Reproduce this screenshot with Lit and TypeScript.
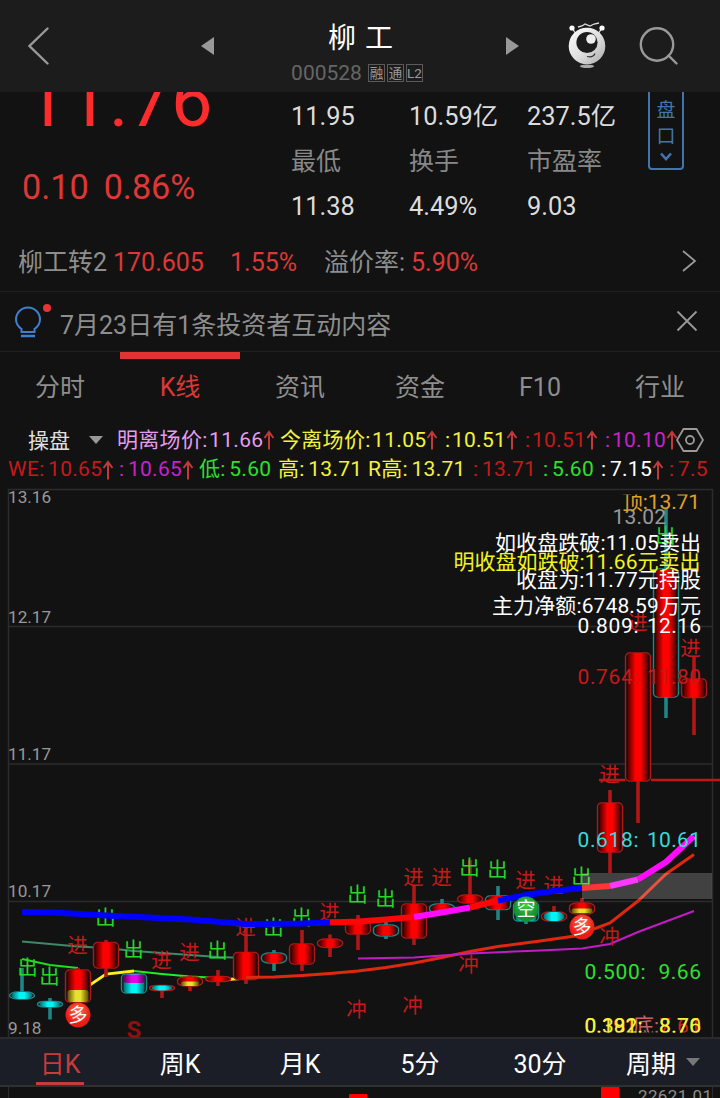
import { LitElement, css, html, nothing, svg } from "lit";
import { customElement, property } from "lit/decorators.js";
import { classMap } from "lit/directives/class-map.js";
import { styleMap } from "lit/directives/style-map.js";

type Legend = { text: string; color: string; width: number; up?: boolean };
// x, body top, body bottom, wick top, wick bottom, fill, outline, wick
type Candle = [number, number, number, number, number, string, string, string];

const RED = "#b01818";
const TEAL = "#1f8585";

const legendTop: Legend[] = [
  { text: "明离场价: 11.66", color: "#e59cf0", width: 163, up: true },
  { text: "今离场价: 11.05", color: "#f3f33c", width: 165, up: true },
  { text: ": 10.51", color: "#f3f33c", width: 80, up: true },
  { text: ": 10.51", color: "#c41a1a", width: 80, up: true },
  { text: ": 10.10", color: "#c822c8", width: 80, up: true },
];

const legendBottom: Legend[] = [
  { text: "WE: 10.65", color: "#c41a1a", width: 111, up: true },
  { text: ": 10.65", color: "#c822c8", width: 80, up: true },
  { text: "低: 5.60", color: "#2ee02e", width: 79 },
  { text: "高: 13.71", color: "#f3f33c", width: 90 },
  { text: "R高: 13.71", color: "#f3f33c", width: 105 },
  { text: ": 13.71", color: "#c41a1a", width: 70 },
  { text: ": 5.60", color: "#2ee02e", width: 58 },
  { text: ": 7.15", color: "#ffffff", width: 68, up: true },
  { text: ": 7.5", color: "#c41a1a", width: 48 },
];

const candles: Candle[] = [
  [22, 992, 999, 968, 992, "cyan", TEAL, TEAL],
  [50, 1001.5, 1007, 998, 1019.5, "cyan", TEAL, TEAL],
  [78, 970, 1002, 968, 1002, "red", RED, RED],
  [106, 942.5, 968, 940, 977, "red", RED, RED],
  [134, 974, 993, 974, 993, "cyan", TEAL, TEAL],
  [162, 985.5, 990.5, 988, 998, "cyan", RED, RED],
  [190, 977, 986, 975, 991, "red", RED, RED],
  [218, 976.5, 981.5, 970, 986, "red", RED, RED],
  [246, 952.5, 979.5, 925, 984, "red", RED, RED],
  [274, 953, 963, 950, 971, "red", TEAL, TEAL],
  [302, 944, 964, 930, 971, "red", RED, RED],
  [330, 939, 947.5, 934.5, 957, "red", RED, RED],
  [358, 922, 934, 915, 950, "red", RED, RED],
  [386, 925, 936, 922, 939, "red", TEAL, TEAL],
  [414, 904, 938, 885, 945, "red", RED, RED],
  [442, 904, 913, 899, 913, "red", TEAL, TEAL],
  [470, 895, 903, 860, 903, "red", RED, RED],
  [498, 896, 909.5, 886, 920, "red", TEAL, TEAL],
  [526, 902, 921, 902, 924, "cyan", TEAL, TEAL],
  [554, 912, 921, 906, 912, "cyan", RED, RED],
  [582, 903, 914, 898, 914, "red", RED, RED],
  [610, 803, 852, 790, 873, "red", RED, RED],
  [638, 653, 781, 653, 823, "red", RED, RED],
  [666, 569, 697, 508, 718, "red", TEAL, TEAL],
  [694, 679, 697.5, 657, 735, "red", RED, RED],
];

const trend: [string, string][] = [
  ["#0000ff", "22,912 50,912.3 106,915.5 190,919.5 246,924 302,923.5 330,922.5"],
  ["#ff0505", "330,922.5 358,921.5 386,919.5 414,917"],
  ["#ff0cff", "414,917 442,912.5 470,907.5"],
  ["#ff0505", "470,907.5 498,900.5"],
  ["#0000ff", "498,900.5 526,895 554,891 582,888"],
  ["#ff3434", "582,888 610,886"],
  ["#fb38fb", "610,886 638,879.5"],
  ["#ff0cff", "638,879.5 666,862 694,836"],
];

const signals: [string, string, [number, number][]][] = [
  ["出", "#27d627", [
    [28, 967], [50, 976], [106, 917], [134, 949], [218, 950], [274, 927], [302, 917],
    [358, 894], [386, 898], [470, 867], [498, 869], [582, 876], [666, 535],
  ]],
  ["进", "#c41a1a", [
    [78, 945], [162, 960], [190, 952], [246, 927], [330, 912], [414, 877], [442, 877],
    [526, 880], [554, 885], [610, 774], [638, 622], [691, 648],
  ]],
  ["冲", "#c41a1a", [[357, 1009], [413, 1005], [469, 964], [610, 936]]],
];

// text, left, right, baseline, color
const notes: [string, number, number, number, string][] = [
  ["13.02", 612.5, 666, 524, "#999"],
  ["如收盘跌破:11.05卖出", 495, 701, 550, "#fff"],
  ["明收盘如跌破:11.66元卖出", 453.5, 700.5, 568.5, "#f3f320"],
  ["收盘为:11.77元持股", 516, 701, 586.5, "#fff"],
  ["主力净额:6748.59万元", 492, 701, 613, "#fff"],
  ["0.809:", 577.5, 638.5, 633, "#fff"],
  ["12.16", 647, 701, 633, "#fff"],
  ["0.764:", 577.5, 638.5, 684, "#c41a1a"],
  ["11.80", 647, 701, 684, "#c41a1a"],
  ["0.618:", 577.5, 638.5, 847, "#38dada"],
  ["10.61", 647, 701, 847, "#38dada"],
  ["0.500:", 584.5, 645.5, 979, "#2ee02e"],
  ["9.66", 658.5, 701, 979, "#2ee02e"],
];

const arrow = html`<svg class="up" viewBox="0 0 12 20">
  <path d="M6 19.500V2.500M1.500 8L6 2l4.500 6" fill="none" stroke="#c03a3a" stroke-width="2" />
</svg>`;

@customElement("stock-header")
export class StockHeader extends LitElement {
  render() {
    return html`
      <svg class="back" viewBox="0 0 22 38">
        <path d="M19.500 1.500L1.500 19l18 17.500" />
      </svg>
      <svg class="prev" viewBox="0 0 13 18"><path d="M13 0v18L0 9z" /></svg>
      <div class="title">
        <div class="name">柳 工</div>
        <div class="code">
          000528<span class="tag">融</span><span class="tag">通</span><span class="tag">L2</span>
        </div>
      </div>
      <svg class="next" viewBox="0 0 13 18"><path d="M0 0v18L13 9z" /></svg>
      <svg class="robot" viewBox="0 0 40 48">
        <defs>
          <linearGradient id="ball" x1="0" y1="0" x2="1" y2="1">
            <stop offset="0" stop-color="#fff" />
            <stop offset=".55" stop-color="#ddd" />
            <stop offset="1" stop-color="#aaa" />
          </linearGradient>
        </defs>
        <path class="hair" d="M11 5l4-1 3-2 5 2 4-2 5-1" />
        <path class="horn" d="M5 6l4 6M35 6l-4 6" />
        <circle cx="5" cy="6" r="2.6" fill="#fff" />
        <circle cx="35" cy="6" r="2.6" fill="#fff" />
        <circle cx="20" cy="24" r="18.3" fill="url(#ball)" />
        <circle cx="20" cy="20.5" r="10.6" fill="#1c1c1c" />
        <circle cx="24" cy="17" r="4.8" fill="#eee" />
        <path d="M20 34.5q6 1.5 8-3" fill="none" stroke="#333" stroke-width="1.2" />
        <ellipse cx="20" cy="44.3" rx="7" ry="1.8" fill="#aaa" />
      </svg>
      <svg class="search" viewBox="0 0 40 40">
        <circle cx="18" cy="18.5" r="16.2" />
        <path d="M29.500 29.500l8 8" />
      </svg>
    `;
  }

  static override styles = css`
    :host {
      display: flex;
      align-items: center;
      height: 92px;
      background: #1c1c1c;
      color: #fff;
    }
    svg {
      flex: none;
      fill: #999;
    }
    .back,
    .search {
      fill: none;
      stroke: #999;
      stroke-width: 2.4;
      stroke-linecap: round;
    }
    .back {
      width: 22px;
      height: 38px;
      margin-left: 28px;
    }
    .prev,
    .next {
      width: 13px;
      height: 18px;
    }
    .prev {
      margin-left: 151px;
    }
    .title {
      width: 292px;
      height: 76px;
      display: flex;
      flex-direction: column;
      align-items: center;
    }
    .name {
      font-size: 28px;
      line-height: 36px;
      margin-top: 13px;
      word-spacing: 2px;
      padding-left: 1px;
    }
    .code {
      display: flex;
      align-items: center;
      font-size: 21px;
      line-height: 28px;
      margin-top: 2px;
      margin-left: -6px;
      color: #666;
    }
    .tag {
      box-sizing: border-box;
      width: 17px;
      height: 18px;
      margin-left: 2px;
      border: 1px solid #5a5a5a;
      font-size: 13.5px;
      line-height: 16px;
      text-align: center;
      color: #999;
    }
    .tag:first-of-type {
      margin-left: 6px;
    }
    .robot {
      width: 40px;
      height: 48px;
      margin-left: 48px;
    }
    .hair,
    .horn {
      fill: none;
      stroke: #ddd;
      stroke-width: 1.3;
    }
    .search {
      width: 40px;
      height: 40px;
      margin-left: 32px;
    }
  `;
}

@customElement("stock-quote")
export class StockQuote extends LitElement {
  private stats = ["11.95", "10.59亿", "237.5亿", "最低", "换手", "市盈率", "11.38", "4.49%", "9.03"];

  render() {
    return html`
      <div class="price">
        <div class="last">11.76</div>
        <div class="change"><span>0.10</span><span>0.86%</span></div>
      </div>
      <div class="stats">
        ${this.stats.map(
          (s, i) => html`<span class=${classMap({ label: i > 2 && i < 6 })}>${s}</span>`
        )}
      </div>
      <div class="depth">
        <span>盘</span><span>口</span>
        <svg viewBox="0 0 12 9"><path d="M1 1.500l5 5.500 5-5.500" /></svg>
      </div>
    `;
  }

  static override styles = css`
    :host {
      display: flex;
      height: 140px;
      overflow: hidden;
    }
    .price {
      width: 269px;
      padding-left: 22px;
    }
    .last {
      color: #fc2c2c;
      font-size: 74px;
      letter-spacing: 0.4px;
      line-height: 80px;
      margin-top: -31px;
      padding-left: 3px;
    }
    .change {
      display: flex;
      gap: 15px;
      margin-top: 26px;
      font-size: 34.2px;
      line-height: 40px;
      color: #dc3836;
    }
    .stats {
      display: grid;
      grid-template-columns: 118px 118px 121px;
      grid-auto-rows: 45px;
      margin-top: 2px;
      line-height: 45px;
      font-size: 25.4px;
      color: #dcdcdc;
      white-space: nowrap;
    }
    .label {
      font-size: 25px;
      color: #888;
    }
    .depth {
      box-sizing: border-box;
      width: 36px;
      height: 82px;
      margin-top: -4px;
      padding-top: 8px;
      display: flex;
      flex-direction: column;
      align-items: center;
      border: 2px solid #4374ae;
      border-radius: 4px;
      color: #4374ae;
      font-size: 19px;
      line-height: 26px;
    }
    .depth svg {
      width: 12px;
      height: 9px;
      margin-top: 2px;
      fill: none;
      stroke: #4374ae;
      stroke-width: 2.6;
    }
  `;
}

@customElement("stock-chart")
export class StockChart extends LitElement {
  private candle([x, top, bottom, high, low, fill, outline, wick]: Candle) {
    const h = bottom - top;
    const r = Math.min(4, h / 2);
    return svg`
      <line x1=${x} x2=${x} y1=${high} y2=${low} stroke=${wick} stroke-width="3.6" />
      <rect x=${x - 12.5} y=${top} width="25" height=${h} rx=${h < 12 ? 8 : r} ry=${r}
        fill="#121212" stroke=${outline} stroke-width="1.4" />
      <rect x=${x - 10.5} y=${top} width="21" height=${h} rx=${h < 12 ? 8 : r} ry=${r}
        fill="url(#${fill})" />
    `;
  }

  private line(color: string, points: string, width: number) {
    return svg`<polyline points=${points} fill="none" stroke=${color} stroke-width=${width} />`;
  }

  private badge(x: number, y: number, text: string, color: string) {
    return svg`
      <circle cx=${x} cy=${y} r="12.5" fill="url(#${color})" />
      <text class="badge" x=${x} y=${y + 7}>${text}</text>
    `;
  }

  private gradient(id: string, edge: string, mid: string) {
    return svg`<linearGradient id=${id}>
      <stop offset="0" stop-color=${edge} />
      <stop offset=".38" stop-color=${mid} />
      <stop offset=".62" stop-color=${mid} />
      <stop offset="1" stop-color=${edge} />
    </linearGradient>`;
  }

  render() {
    return html`<svg viewBox="0 488 720 551">
      <defs>
        ${this.gradient("red", "#4c0000", "#ff0000")}
        ${this.gradient("cyan", "#006c70", "#00f4f4")}
        ${this.gradient("yellow", "#5c5000", "#e8e030")}
        ${this.gradient("magenta", "#5c005c", "#e800e8")}
        <radialGradient id="badge-red" cy=".35">
          <stop offset="0" stop-color="#ff7058" />
          <stop offset="1" stop-color="#e81c14" />
        </radialGradient>
        <radialGradient id="badge-green" cy=".35">
          <stop offset="0" stop-color="#48c848" />
          <stop offset="1" stop-color="#149030" />
        </radialGradient>
        <clipPath id="plot"><rect x="8" y="494.5" width="704" height="538" /></clipPath>
      </defs>
      <path class="grid" d="M8 489.5H712.5V1038M8.5 489V1038M8 626.5H712M8 764H712M8 901.5H712" />
      <rect x="0" y="1037" width="720" height="2" fill="#2b2b2d" />
      ${this.line("#3c8a68", "22,941.5 50,944 78,946.5 106,948 134,951 162,953 190,955 218,957 246,958", 1.8)}
      ${this.line("#22dc22", "22,959 50,965 78,968", 1.8)}
      ${this.line("#ffee20", "78,993 106,974 134,971", 2.8)}
      ${this.line("#22ee22", "134,971 162,974 190,976.5 210,977.5", 1.8)}
      ${this.line("#ffee20", "228,979.5 246,978", 2.8)}
      ${candles.map((c) => this.candle(c))}
      <rect x="67.5" y="990" width="21" height="12" rx="3" fill="url(#yellow)" />
      <rect x="123.5" y="974.5" width="21" height="8.5" rx="3" fill="url(#magenta)" />
      <rect x="181" y="981.5" width="18" height="4.5" rx="2" fill="url(#yellow)" />
      <rect x="571.5" y="908.5" width="21" height="4.5" rx="2" fill="url(#yellow)" />
      ${this.line("#e02810", "246,977.5 274,977 302,975.5 330,973.5 358,971 386,967.5 414,963 442,957.5 470,951.5 498,946.5 540,941 575,936 610,923 638,901 666,874 694,854.5", 3)}
      ${this.line("#c41cc4", "358,958.5 414,957.5 442,955.5 470,953.5 540,950.5 582,948.5 610,944 638,932 666,921.5 694,911", 2)}
      ${signals.map(([text, color, points]) =>
        points.map(
          ([x, y]) => svg`<text class="signal" x=${x - 0.5} y=${y + 7.5} fill=${color}>${text}</text>`
        )
      )}
      <rect x="582" y="873" width="130" height="26" fill="#fff" fill-opacity=".2" />
      ${trend.map(([color, points]) => this.line(color, points, 6))}
      ${this.badge(526, 909, "空", "badge-green")}
      ${this.badge(78, 1015, "多", "badge-red")}
      ${this.badge(582, 927, "多", "badge-red")}
      <path d="M599 780H625M651 780H720" stroke="#c41414" stroke-width="2.6" />
      <text class="sell" x="134" y="1037.5">S</text>
      ${notes.map(
        ([text, left, right, y, color]) => svg`<text
          x=${left} y=${y} textLength=${right - left} fill=${color}>${text}</text>`
      )}
      <g clip-path="url(#plot)">
        <text x="622" y="508.5" textLength="78" fill="#e0a028">顶:13.71</text>
        <text x="596" y="1033" textLength="40" fill="#c41a1a">.191</text>
        <text x="633" y="1033" fill="#c46464">底:</text>
        <text x="659" y="1033" textLength="42" fill="#d02020">7.61</text>
        <text x="584.5" y="1033" textLength="58" fill="#f3e32c">0.191:</text>
        <text x="659" y="1033" textLength="42" fill="#f3e32c">8.70</text>
        <text x="584.5" y="1033" textLength="58" fill="#f3f33c">0.382:</text>
        <text x="659" y="1033" textLength="42" fill="#f3f33c">8.76</text>
      </g>
      ${[["13.16", 503], ["12.17", 623], ["11.17", 760], ["10.17", 897], ["9.18", 1034]].map(
        ([text, y]) => svg`<text class="axis" x="8" y=${y}>${text}</text>`
      )}
    </svg>`;
  }

  static override styles = css`
    :host {
      display: block;
      height: 551px;
    }
    svg {
      display: block;
      width: 720px;
      height: 551px;
    }
    .grid {
      fill: none;
      stroke: #2c2c2c;
      stroke-width: 1.5;
    }
    text {
      font-size: 21px;
    }
    .signal {
      font-size: 20.5px;
      text-anchor: middle;
    }
    .badge {
      font-size: 19px;
      text-anchor: middle;
      fill: #fff;
    }
    .axis {
      font-size: 17.2px;
      fill: #999;
    }
    .sell {
      font-size: 24px;
      font-weight: bold;
      text-anchor: middle;
      fill: #8c1010;
    }
  `;
}

@customElement("stock-legend")
export class StockLegend extends LitElement {
  @property({ attribute: false })
  public items: Legend[] = [];

  render() {
    return this.items.map(
      (i) => html`<span class="item" style=${styleMap({ width: `${i.width}px`, color: i.color })}
        >${i.text}${i.up ? arrow : nothing}</span
      >`
    );
  }

  static override styles = css`
    :host {
      display: flex;
      height: 30px;
      line-height: 30px;
      font-size: 21px;
      letter-spacing: 0.3px;
      word-spacing: -2px;
      white-space: nowrap;
    }
    .item {
      display: flex;
      align-items: center;
      flex: none;
    }
    .up {
      width: 12px;
      height: 20px;
      flex: none;
    }
  `;
}

@customElement("app-root")
export class AppRoot extends LitElement {
  private tabs = ["分时", "K线", "资讯", "资金", "F10", "行业"];
  private periods = ["日K", "周K", "月K", "5分", "30分", "周期"];

  render() {
    return html`
      <stock-header></stock-header>
      <stock-quote></stock-quote>
      <div class="bond">
        <span class="bond-name">柳工转2</span>
        <span class="rise bond-price">170.605</span>
        <span class="rise bond-rate">1.55%</span>
        <span class="premium">溢价率:</span>
        <span class="rise">5.90%</span>
        <svg class="more" viewBox="0 0 16 24"><path d="M2 2l12 10L2 22" /></svg>
      </div>
      <div class="notice">
        <svg class="bulb" viewBox="0 0 38 36">
          <path d="M7.5 28v-3C4 22.500 2 19 2 15.500a12 12 0 0 1 24 0c0 3.500-2 7-5.500 9.500v3z" />
          <path d="M7 32h14" stroke-width="2.500" />
          <circle cx="33" cy="4" r="4" />
        </svg>
        <span class="notice-text">7月23日有1条投资者互动内容</span>
        <svg class="close" viewBox="0 0 22 22"><path d="M1.500 1.500l19 19M20.500 1.500l-19 19" /></svg>
      </div>
      <nav class="tabs">
        ${this.tabs.map(
          (t, i) => html`<span class=${classMap({ tab: true, active: i === 1 })}>${t}</span>`
        )}
      </nav>
      <div class="indicator">
        <span class="preset">操盘</span>
        <svg class="caret" viewBox="0 0 14 8"><path d="M0 0h14L7 8z" /></svg>
        <stock-legend class="top-legend" .items=${legendTop}></stock-legend>
        <svg class="settings" viewBox="0 0 28 24">
          <path d="M7.500 1h13L27 12l-6.500 11h-13L1 12z" />
          <circle cx="14" cy="12" r="4" />
        </svg>
      </div>
      <stock-legend class="bottom-legend" .items=${legendBottom}></stock-legend>
      <stock-chart></stock-chart>
      <nav class="periods">
        ${this.periods.map(
          (p, i) => html`<span class=${classMap({ period: true, current: i === 0 })}
            >${p}${i === 5
              ? html`<svg class="caret" viewBox="0 0 14 8"><path d="M0 0h14L7 8z" /></svg>`
              : nothing}</span
          >`
        )}
      </nav>
      <svg class="volume" viewBox="0 1087 720 11">
        <path d="M8.500 1087v11M712.500 1087v11" stroke="#2c2c2c" />
        <rect x="349" y="1094" width="18" height="6" rx="1" fill="#f00" />
        <rect x="601" y="1087" width="18" height="11" fill="#f00" />
        <text x="638" y="1101.500" textLength="74">22621.01</text>
      </svg>
    `;
  }

  static override styles = css`
    :host {
      display: flex;
      flex-direction: column;
      width: 720px;
      height: 1098px;
      overflow: hidden;
      background: #121212;
      color: #999;
      font-family: Roboto, "Noto Sans CJK SC", sans-serif;
      font-size: 25px;
    }
    .bond,
    .notice {
      display: flex;
      align-items: center;
      box-sizing: border-box;
      height: 60px;
      border-bottom: 1px solid #202020;
      white-space: nowrap;
      color: #8e8e8e;
    }
    .bond {
      padding: 2px 23px 0 18px;
      align-items: baseline;
      line-height: 58px;
    }
    .rise {
      color: #dc3836;
    }
    .bond-name {
      width: 95px;
    }
    .bond-price {
      width: 117px;
    }
    .bond-rate {
      width: 94px;
    }
    .premium {
      width: 87px;
    }
    .more {
      width: 16px;
      height: 24px;
      margin-left: auto;
      margin-top: -3px;
      align-self: center;
    }
    .more,
    .close,
    .settings {
      fill: none;
      stroke: #999;
      stroke-width: 1.8;
    }
    .notice {
      padding: 0 22px 0 14px;
    }
    .bulb {
      width: 38px;
      height: 36px;
      fill: none;
      stroke: #3f7fd0;
      stroke-width: 2;
    }
    .bulb circle {
      fill: #e63434;
      stroke: none;
    }
    .notice-text {
      flex: 1;
      padding: 2px 0 0 8px;
    }
    .close {
      width: 22px;
      height: 22px;
      margin-top: -1px;
    }
    .tabs {
      display: grid;
      grid-template-columns: repeat(6, 1fr);
      height: 73px;
    }
    .tab {
      box-sizing: border-box;
      border-top: 7px solid transparent;
      line-height: 57px;
      text-align: center;
      color: #8e8e8e;
    }
    .active {
      border-top-color: #e23434;
      color: #dc3836;
    }
    .indicator {
      display: flex;
      align-items: center;
      height: 30px;
    }
    .preset {
      width: 61px;
      padding-left: 28px;
      margin-top: -2px;
      font-size: 21px;
      color: #e0e0e0;
    }
    .caret {
      width: 14px;
      height: 8px;
      fill: #999;
    }
    .top-legend {
      width: 559px;
      margin-left: 14px;
      word-spacing: -4px;
    }
    .settings {
      width: 28px;
      height: 24px;
      z-index: 1;
    }
    .bottom-legend {
      padding-left: 8px;
      height: 33px;
      line-height: 29px;
      align-items: flex-start;
    }
    .periods {
      display: grid;
      grid-template-columns: repeat(6, 1fr);
      flex: none;
      box-sizing: border-box;
      height: 48px;
      background: #1b1e26;
      border-bottom: 2px solid #303030;
      color: #fff;
    }
    .period {
      display: flex;
      justify-content: center;
      align-items: center;
    }
    .period .caret {
      margin-left: 10px;
      margin-right: -6px;
      fill: #777;
    }
    .current {
      box-sizing: border-box;
      width: 48px;
      margin-left: 36px;
      border-bottom: 3px solid #c63c3c;
      padding-top: 2px;
      color: #c63c3c;
    }
    .volume {
      flex: none;
      width: 720px;
      height: 11px;
    }
    .volume text {
      font-size: 17px;
      fill: #8c8c8c;
    }
  `;
}
